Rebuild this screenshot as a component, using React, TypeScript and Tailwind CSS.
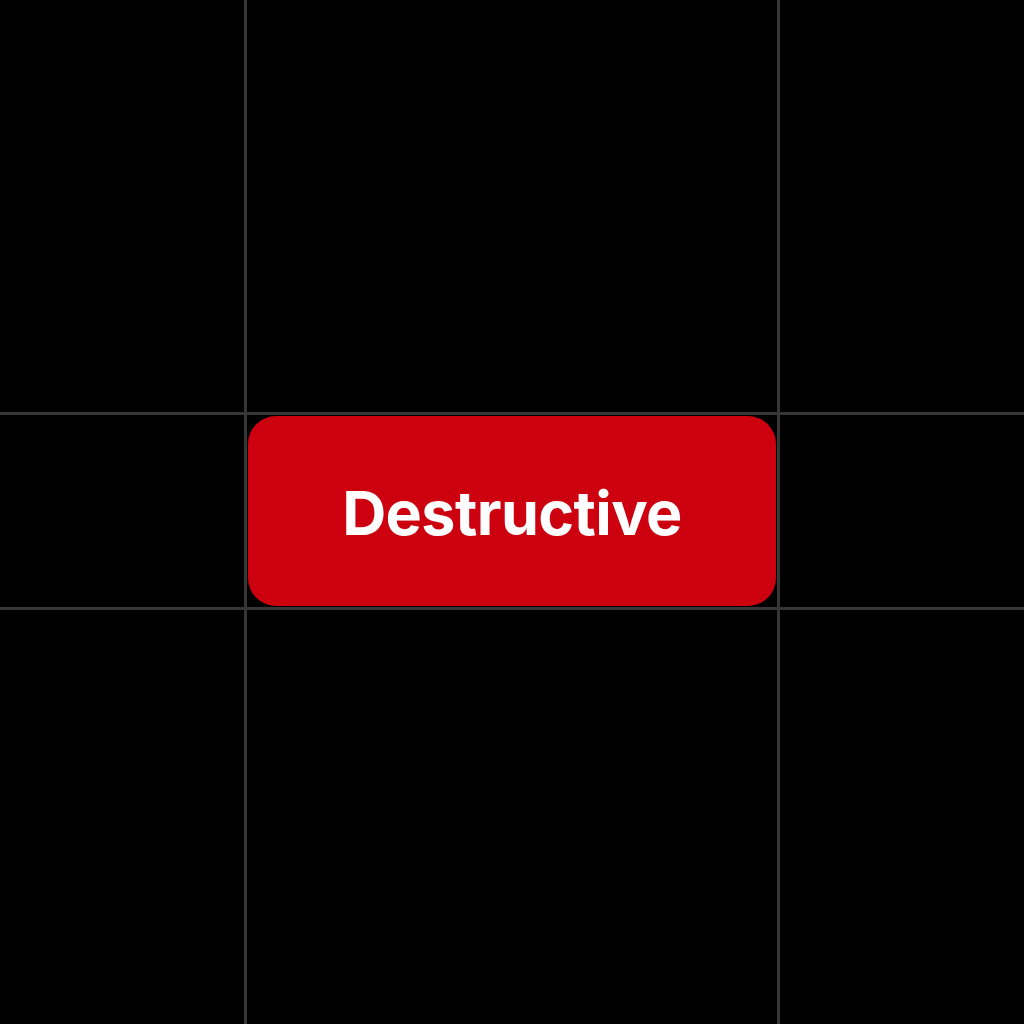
export default function App() {
  return (
    <div className="grid h-[1024px] w-[1024px] grid-cols-[244px_3px_530px_3px_1fr] grid-rows-[412px_3px_192px_3px_1fr] bg-black">
      <div />
      <div className="bg-[#363636]" />
      <div />
      <div className="bg-[#363636]" />
      <div />

      <div className="col-span-5 bg-[#363636]" />

      <div />
      <div className="bg-[#363636]" />
      <div className="p-[1px]">
        <button className="flex h-full w-full items-center justify-center rounded-[28px] bg-[#cc000e] pt-[6px] font-['Inter',sans-serif] text-[61px] font-bold tracking-[-0.6px] text-white">
          Destructive
        </button>
      </div>
      <div className="bg-[#363636]" />
      <div />

      <div className="col-span-5 bg-[#363636]" />

      <div />
      <div className="bg-[#363636]" />
      <div />
      <div className="bg-[#363636]" />
      <div />
    </div>
  );
}
